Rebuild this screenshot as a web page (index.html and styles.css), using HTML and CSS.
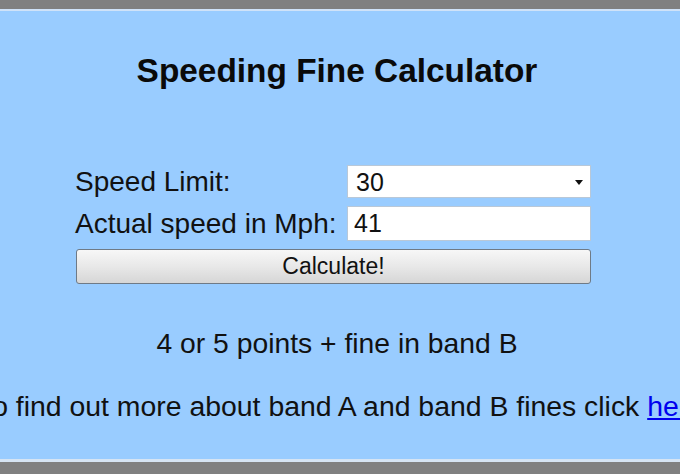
FILE: index.html
```html
<!DOCTYPE html>
<html lang="en">
<head>
    <meta charset="UTF-8">
    <meta name="viewport" content="width=device-width, initial-scale=1.0">
    <title>Speeding Fine Calculator</title>
    <link rel="stylesheet" href="styles.css">
</head>
<body>
    <div class="page">
        <h1>Speeding Fine Calculator</h1>
        <form id="fineForm" class="fine-form">
            <label for="limit">Speed Limit:</label>
            <div class="select-wrap">
                <select id="limit" name="limit">
                    <option value="20">20</option>
                    <option value="30" selected>30</option>
                    <option value="40">40</option>
                    <option value="50">50</option>
                    <option value="60">60</option>
                    <option value="70">70</option>
                </select>
            </div>

            <label for="speed">Actual speed in Mph:</label>
            <input type="text" id="speed" name="speed" value="41">

            <button type="button" class="calc-btn">Calculate!</button>
        </form>

        <div id="result" class="result">4 or 5 points + fine in band B</div>

        <div class="more">
            <span>To find out more about band A and band B fines click <a href="#">here</a></span>
        </div>
    </div>
</body>
</html>
```

FILE: styles.css
```css
body {
    margin: 0;
    background-color: #808080;
    font-family: "Liberation Sans", Arial, sans-serif;
    color: #111;
    overflow: hidden;
}

.page {
    margin-top: 9px;
    height: 453px;
    border-top: 2px solid #cfe2f8;
    border-bottom: 3px solid #d6e4f3;
    background-color: #99ccff;
    padding-right: 6px;
    box-sizing: border-box;
}

h1 {
    margin: 0;
    padding-top: 41px;
    font-size: 33.4px;
    line-height: 38px;
    text-align: center;
    color: #0a0a0a;
}

.fine-form {
    display: grid;
    grid-template-columns: 272px 244px;
    row-gap: 8px;
    width: 516px;
    margin: 75px 0 0 75px;
    align-items: center;
}

.fine-form label {
    font-size: 28px;
    line-height: 32px;
    color: #111;
}

.select-wrap {
    position: relative;
}

.select-wrap::after {
    content: "";
    position: absolute;
    right: 8px;
    top: 15px;
    border-left: 4px solid transparent;
    border-right: 4px solid transparent;
    border-top: 5px solid #111;
}

.fine-form select,
.fine-form input {
    width: 100%;
    box-sizing: border-box;
    border: 1px solid #b9c8d8;
    background-color: #fff;
    font-family: inherit;
    font-size: 25px;
    color: #111;
    margin: 0;
}

.fine-form select {
    height: 33px;
    padding: 0 0 0 8px;
    border-radius: 0;
    appearance: none;
    -webkit-appearance: none;
}

.fine-form input {
    height: 35px;
    padding: 0 6px;
}

.calc-btn {
    grid-column: 1 / 3;
    height: 35px;
    margin-left: 1px;
    border: 1px solid #6f7a86;
    border-radius: 3px;
    background: linear-gradient(#f7f7f7, #e8e8e8 50%, #d6d6d6);
    font-family: inherit;
    font-size: 23px;
    color: #111;
    cursor: pointer;
}

.result {
    margin-top: 43px;
    font-size: 28.3px;
    line-height: 32px;
    text-align: center;
}

.more {
    display: flex;
    justify-content: center;
    margin-top: 31px;
    padding-left: 8px;
    font-size: 28.4px;
    line-height: 32px;
    white-space: nowrap;
}

.more a {
    color: #0000ee;
}
```
